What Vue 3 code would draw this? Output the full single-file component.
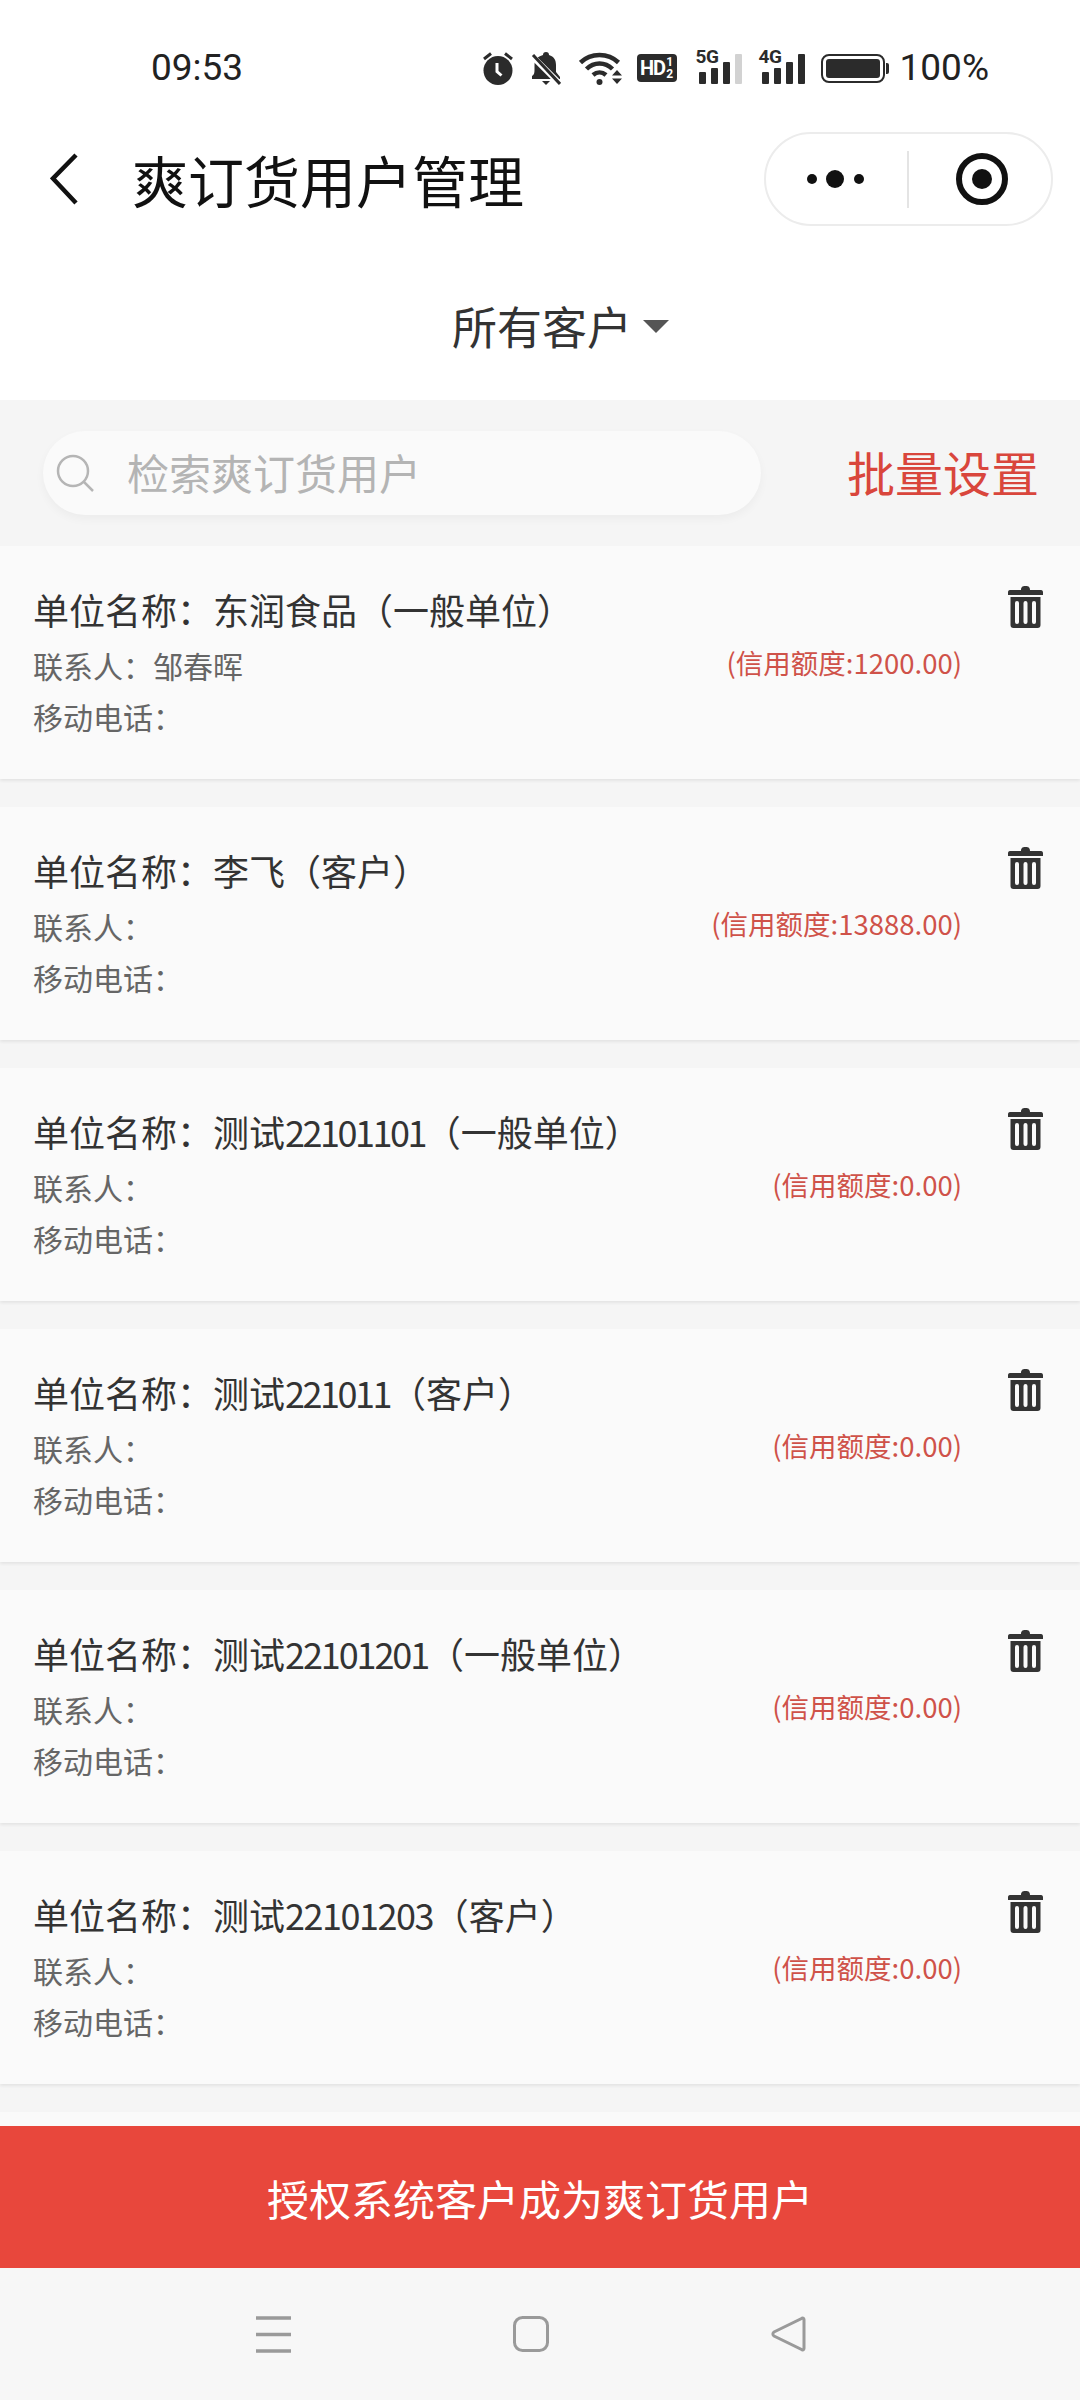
<script setup>
const customers = [
  { pre: '东润食品', num: '', post: '（一般单位）', contact: '邹春晖', credit: '1200.00', track: 0 },
  { pre: '李飞', num: '', post: '（客户）', contact: '', credit: '13888.00', track: 0 },
  { pre: '测试', num: '22101101', post: '（一般单位）', contact: '', credit: '0.00', track: -2.5 },
  { pre: '测试', num: '221011', post: '（客户）', contact: '', credit: '0.00', track: -2.5 },
  { pre: '测试', num: '22101201', post: '（一般单位）', contact: '', credit: '0.00', track: -2.1 },
  { pre: '测试', num: '22101203', post: '（客户）', contact: '', credit: '0.00', track: -1.5 },
]
</script>

<template>
  <div class="screen">
    <header class="status">
      <span class="time">09:53</span>
      <div class="status-icons">
        <svg class="i-alarm" width="30" height="33" viewBox="0 0 30 33">
          <circle cx="15" cy="18.5" r="14.5" fill="#2b2b2b" />
          <path d="M1 7 8 1.5M29 7 22 1.5" stroke="#2b2b2b" stroke-width="3" fill="none" />
          <path d="M14 11v8.5l4.500 4" stroke="#fff" stroke-width="3" fill="none" />
        </svg>
        <svg class="i-bell" width="30" height="33" viewBox="0 0 30 33">
          <path d="M12 3a3 3 0 0 1 6 0c5 1.500 7 5 7 10v7l4 5v2H1v-3c2-1 2.500-3 2.500-6v-5c0-5 3-8.500 8.500-10z" fill="#2b2b2b" />
          <path d="M11 29h8l-4 4z" fill="#2b2b2b" />
          <path d="M1 4 30 33" stroke="#fff" stroke-width="6" />
          <path d="M2 3 29 32" stroke="#2b2b2b" stroke-width="3" />
        </svg>
        <svg class="i-wifi" width="44" height="33" viewBox="0 0 44 33">
          <path d="M1.500 10.500C12 .5 29 .5 39.500 10.500" stroke="#2b2b2b" stroke-width="4.500" fill="none" />
          <path d="M7.500 17C15 9.500 26 9.500 33.500 17" stroke="#2b2b2b" stroke-width="4.500" fill="none" />
          <path d="M14 23C18 19.500 23 19.500 27 23" stroke="#2b2b2b" stroke-width="4.500" fill="none" />
          <circle cx="20.500" cy="30" r="3" fill="#2b2b2b" />
          <path d="M33 23.500 38 18l5 5.500zM33 26.500h10L38 32z" fill="#2b2b2b" />
        </svg>
        <div class="hd"><span class="hd-main">HD</span><span class="hd-frac"><span>1</span><span>2</span></span></div>
        <div class="signal">
          <span class="net">5G</span>
          <i class="b1"></i><i class="b2"></i><i class="b3"></i><i class="b4 off"></i>
        </div>
        <div class="signal sig4">
          <span class="net">4G</span>
          <i class="b1"></i><i class="b2"></i><i class="b3"></i><i class="b4"></i>
        </div>
        <div class="battery"><div class="battery-body"><div class="battery-fill"></div></div><div class="battery-tip"></div></div>
        <span class="pct">100%</span>
      </div>
    </header>

    <nav class="navbar">
      <svg class="back" width="29" height="52" viewBox="0 0 29 52">
        <path d="M26 2 3 25.500 26 50" stroke="#111" stroke-width="4.500" fill="none" />
      </svg>
      <h1 class="title">爽订货用户管理</h1>
      <div class="capsule">
        <svg class="dots" width="58" height="20" viewBox="0 0 58 20">
          <circle cx="5" cy="10" r="5" fill="#111" />
          <circle cx="28" cy="10" r="9" fill="#111" />
          <circle cx="52" cy="10" r="5" fill="#111" />
        </svg>
        <div class="cap-sep"></div>
        <svg class="target" width="52" height="52" viewBox="0 0 52 52">
          <circle cx="26" cy="26" r="23" stroke="#111" stroke-width="6" fill="none" />
          <circle cx="26" cy="26" r="10" fill="#111" />
        </svg>
      </div>
    </nav>

    <div class="filter">
      <span class="filter-text">所有客户</span>
      <span class="caret"></span>
    </div>

    <section class="tools">
      <div class="search">
        <svg class="search-icon" width="38" height="38" viewBox="0 0 38 38">
          <circle cx="17" cy="17" r="15" stroke="#b5b5b5" stroke-width="2.500" fill="none" />
          <path d="M28 28 37 37" stroke="#b5b5b5" stroke-width="2.500" />
        </svg>
        <span class="placeholder">检索爽订货用户</span>
      </div>
      <span class="batch">批量设置</span>
    </section>

    <main class="list">
      <article v-for="(c, i) in customers" :key="i" class="card">
        <div class="info">
          <div class="name">单位名称：{{ c.pre }}<span :style="{ letterSpacing: c.track + 'px' }">{{ c.num }}</span>{{ c.post }}</div>
          <div class="line first">联系人：{{ c.contact }}</div>
          <div class="line">移动电话：</div>
        </div>
        <div class="credit">(信用额度:{{ c.credit }})</div>
        <svg class="trash" width="35" height="42" viewBox="0 0 35 42">
          <path d="M13 4c0-2.500 1-4 4.500-4S22 1.500 22 4h11c1.500 0 2 1 2 2.500V9H0V6.500C0 5 .5 4 2 4z" fill="#333" />
          <path fill-rule="evenodd" d="M2.500 11h30v28c0 2-1 3-3 3h-24c-2 0-3-1-3-3zM7 17v19a2 2 0 0 0 4 0V17a2 2 0 0 0-4 0zm8.500 0v19a2 2 0 0 0 4 0V17a2 2 0 0 0-4 0zm8.500 0v19a2 2 0 0 0 4 0V17a2 2 0 0 0-4 0z" fill="#333" />
        </svg>
      </article>
      <div class="card"></div>
    </main>

    <button class="authorize">授权系统客户成为爽订货用户</button>

    <footer class="sysnav">
      <svg width="35" height="37" viewBox="0 0 35 37">
        <path d="M0 2h35M0 18.500h35M0 35h35" stroke="#9a9a9a" stroke-width="3.500" />
      </svg>
      <svg width="36" height="36" viewBox="0 0 36 36">
        <rect x="1.500" y="1.500" width="33" height="33" rx="8" stroke="#9a9a9a" stroke-width="3" fill="none" />
      </svg>
      <svg width="36" height="36" viewBox="0 0 36 36">
        <path d="M33 3.500c0-1.500-1.500-2-2.500-1L3 16c-1.500 1-1.500 3 0 4l27.500 13.500c1 1 2.500 .5 2.500-1z" stroke="#9a9a9a" stroke-width="3" fill="none" />
      </svg>
    </footer>
  </div>
</template>

<style>
html, body { margin: 0; padding: 0; background: #fff; }
</style>

<style scoped>
.screen {
  width: 1080px;
  height: 2400px;
  display: flex;
  flex-direction: column;
  overflow: hidden;
  background: #f5f5f5;
  font-family: "Noto Sans CJK SC", "Noto Sans", sans-serif;
  color: #333;
}
.status {
  height: 118px;
  flex: none;
  background: #fff;
  display: flex;
  align-items: center;
  justify-content: space-between;
  padding: 18px 91px 0 151px;
  box-sizing: border-box;
  color: #222;
}
.time, .pct {
  font-family: Roboto, sans-serif;
  font-size: 37px;
  line-height: 40px;
  color: #222;
}
.status-icons { display: flex; align-items: center; }
.i-bell { margin-left: 18px; }
.i-wifi { margin-left: 18px; }
.hd {
  margin-left: 14px;
  width: 40px;
  height: 28px;
  background: #2b2b2b;
  border-radius: 4px;
  color: #fff;
  display: flex;
  align-items: center;
  justify-content: center;
  font-family: Roboto, sans-serif;
  font-weight: 700;
  overflow: hidden;
}
.hd-main { font-size: 20px; letter-spacing: -1px; line-height: 28px; }
.hd-frac { display: flex; flex-direction: column; font-size: 12px; line-height: 12px; margin-left: 1px; }
.signal {
  position: relative;
  margin-left: 19px;
  width: 46px;
  height: 32px;
  display: flex;
  align-items: flex-end;
  gap: 5px;
  padding-left: 3px;
  box-sizing: border-box;
}
.sig4 { margin-left: 17px; }
.signal i { display: block; width: 7px; background: #2b2b2b; border-radius: 1px; }
.signal .b1 { height: 12px; }
.signal .b2 { height: 16px; }
.signal .b3 { height: 22px; }
.signal .b4 { height: 30px; }
.signal .off { background: #d2d2d2; }
.net {
  position: absolute;
  left: 0;
  top: -5px;
  font-family: Roboto, sans-serif;
  font-size: 19px;
  font-weight: 700;
  line-height: 20px;
  letter-spacing: -.5px;
  color: #2b2b2b;
}
.battery { margin-left: 16px; display: flex; align-items: center; }
.battery-body {
  width: 64px;
  height: 29px;
  box-sizing: border-box;
  border: 2.500px solid #2b2b2b;
  border-radius: 8px;
  padding: 3px;
}
.battery-fill { width: 100%; height: 100%; background: #2b2b2b; border-radius: 3px; }
.battery-tip { width: 3px; height: 11px; background: #2b2b2b; border-radius: 0 2px 2px 0; margin-left: 1px; }
.pct { margin-left: 11px; }

.navbar {
  height: 122px;
  flex: none;
  background: #fff;
  display: flex;
  align-items: center;
  padding: 0 27px 0 50px;
  box-sizing: border-box;
}
.title {
  margin: 0 0 0 53px;
  font-size: 56px;
  line-height: 70px;
  font-weight: 400;
  color: #111;
  flex: 1;
}
.capsule {
  width: 289px;
  height: 94px;
  box-sizing: border-box;
  border: 2px solid #ececec;
  border-radius: 47px;
  display: flex;
  align-items: center;
  padding-left: 41px;
}
.cap-sep { width: 2px; height: 57px; background: #e4e4e4; margin-left: 42px; }
.target { margin-left: 47px; }

.filter {
  height: 160px;
  flex: none;
  background: #fff;
  box-sizing: border-box;
  padding: 12px 0 0 41px;
  display: flex;
  align-items: center;
  justify-content: center;
}
.filter-text { font-size: 45px; line-height: 60px; color: #333; }
.caret {
  margin-left: 11px;
  width: 0;
  height: 0;
  border-left: 13px solid transparent;
  border-right: 13px solid transparent;
  border-top: 13px solid #555;
}

.tools {
  height: 146px;
  flex: none;
  box-sizing: border-box;
  padding: 31px 41px 0 43px;
  display: flex;
  align-items: flex-start;
  justify-content: space-between;
}
.search {
  width: 718px;
  height: 84px;
  box-sizing: border-box;
  border-radius: 42px;
  background: #fafafa;
  box-shadow: 0 4px 10px rgba(0, 0, 0, .04);
  display: flex;
  align-items: center;
  padding-left: 13px;
}
.search-icon { flex: none; }
.placeholder { margin-left: 33px; font-size: 42px; line-height: 60px; margin-top: -2px; color: #b4b4b4; }
.batch { font-size: 48px; line-height: 80px; color: #d9463c; }

.list { flex: 1; min-height: 0; overflow: hidden; }
.card {
  height: 233px;
  margin-bottom: 28px;
  box-sizing: border-box;
  background: #fafafa;
  box-shadow: 0 2px 3px rgba(0, 0, 0, .07);
  padding: 40px 37px 0 33px;
  display: flex;
  align-items: flex-start;
}
.info { flex: 1; min-width: 0; }
.name { font-size: 36px; line-height: 52px; margin-top: -3px; color: #333; }
.line { font-size: 30px; line-height: 51px; color: #666; }
.first { margin-top: 5px; }
.credit {
  margin-top: 56px;
  margin-right: 46px;
  font-size: 27.5px;
  line-height: 40px;
  color: #cf5249;
  white-space: nowrap;
}
.trash { flex: none; }

.authorize {
  height: 142px;
  flex: none;
  width: 100%;
  border: 0;
  padding: 0;
  background: #e8473c;
  color: #fff;
  font-family: inherit;
  font-size: 42px;
}
.sysnav {
  height: 132px;
  flex: none;
  background: #f7f7f7;
  display: flex;
  align-items: center;
  justify-content: center;
  gap: 222px;
  padding-right: 18px;
}
</style>
